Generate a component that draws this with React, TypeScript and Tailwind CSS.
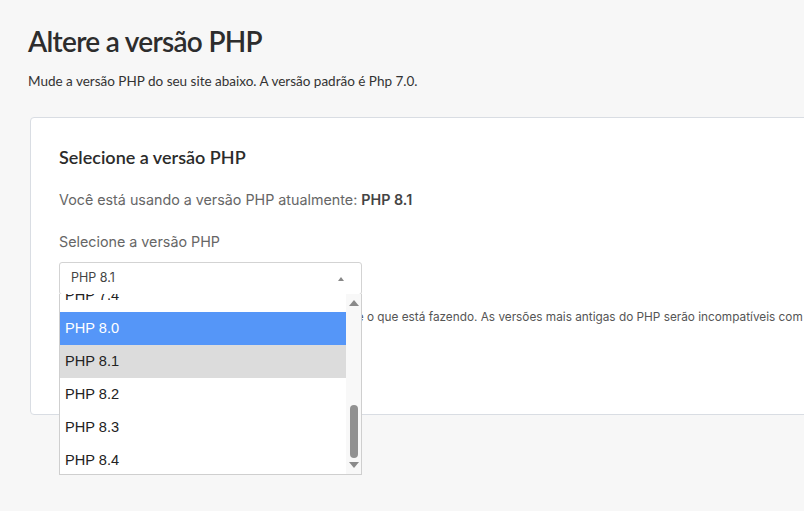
import React from "react";

const items = ["PHP 7.4", "PHP 8.0", "PHP 8.1", "PHP 8.2", "PHP 8.3", "PHP 8.4"];

export default function App() {
  return (
    <div
      className="w-[804px] h-[511px] overflow-hidden bg-[#f7f7f7] relative"
      style={{ fontFamily: "Inter, 'Noto Sans', sans-serif" }}
    >
      <div className="pl-[28px] pt-[22px]">
        <h1
          className="text-[28px] leading-[38px] font-semibold text-[#2d2d2d] tracking-[-0.7px]"
          style={{ fontFamily: "Lato, 'Noto Sans', sans-serif" }}
        >
          Altere a versão PHP
        </h1>
        <p
          className="mt-[12px] text-[13.5px] leading-[18px] text-[#333]"
          style={{ fontFamily: "Lato, 'Noto Sans', sans-serif" }}
        >
          Mude a versão PHP do seu site abaixo. A versão padrão é Php 7.0.
        </p>
      </div>
      <div className="ml-[30px] mt-[27px] w-[820px] h-[298px] bg-white border border-[#d9dde3] rounded-[4px] pl-[28px] pt-[27px]">
        <h2
          className="text-[18px] leading-[24px] font-semibold text-[#2b2b2b]"
          style={{ fontFamily: "Lato, 'Noto Sans', sans-serif" }}
        >
          Selecione a versão PHP
        </h2>
        <p className="mt-[21px] text-[14.3px] leading-[20px] text-[#666]">
          Você está usando a versão PHP atualmente: <span className="font-semibold text-[#444]">PHP 8.1</span>
        </p>
        <p className="mt-[22px] text-[14.3px] leading-[20px] text-[#666]">Selecione a versão PHP</p>
        <div className="relative mt-[10px] w-[303px]">
          <div className="h-[33px] border border-[#d3d3d3] rounded-[3px] flex items-center justify-between pl-[11px] pr-[17px] text-[12.5px] text-[#444]">
            <span>PHP 8.1</span>
            <span className="w-0 h-0 border-l-[3.5px] border-r-[3.5px] border-b-[4px] border-l-transparent border-r-transparent border-b-[#888]" />
          </div>
          <p className="mt-[14px] pl-[17px] whitespace-nowrap text-[11.8px] leading-[16px] text-[#555]">
            Atenção: só altere a versão se você realmente sabe o que está fazendo. As versões mais antigas do PHP serão incompatíveis com o seu site.
          </p>
          <div
            className="absolute left-0 top-[32px] w-[303px] h-[181px] bg-white border border-[#cfcfcf] border-t-0 overflow-hidden flex"
            style={{ fontFamily: "'Liberation Sans', Arial, sans-serif" }}
          >
            <div className="flex-1 flex flex-col -mt-[15px]">
              {items.map((it) => (
                <div
                  key={it}
                  className={
                    "h-[33px] shrink-0 flex items-center pl-[5px] text-[14.6px] " +
                    (it === "PHP 8.0"
                      ? "bg-[#5596f8] text-white"
                      : it === "PHP 8.1"
                      ? "bg-[#dcdcdc] text-[#222]"
                      : "text-[#222]")
                  }
                >
                  {it}
                </div>
              ))}
            </div>
            <div className="w-[15px] bg-[#f8f8f8] flex flex-col items-center justify-between py-[6px]">
              <span className="w-0 h-0 border-l-[5px] border-r-[5px] border-b-[6px] border-l-transparent border-r-transparent border-b-[#8a8a8a]" />
              <div className="flex-1 w-full flex flex-col justify-end items-center pb-[4px]">
                <div className="w-[8px] h-[53px] rounded-full bg-[#919191]" />
              </div>
              <span className="w-0 h-0 border-l-[5px] border-r-[5px] border-t-[6px] border-l-transparent border-r-transparent border-t-[#8a8a8a]" />
            </div>
          </div>
        </div>
      </div>
    </div>
  );
}
